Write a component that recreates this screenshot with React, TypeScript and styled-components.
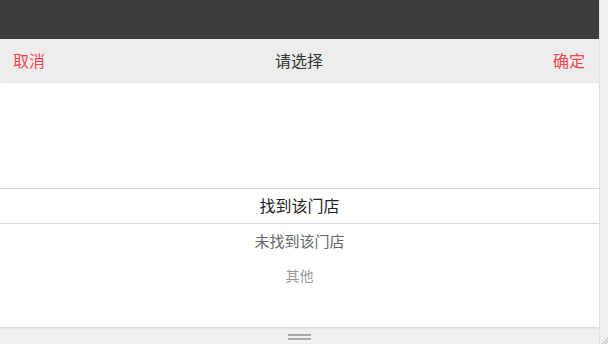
import React from "react";
import styled, { createGlobalStyle } from "styled-components";

const GlobalStyle = createGlobalStyle`
  html, body {
    margin: 0;
    padding: 0;
    background: #f0f0f0;
  }
  body {
    font-family: "Liberation Sans", "Noto Sans CJK SC", sans-serif;
  }
`;

const Screen = styled.div`
  width: 608px;
  height: 344px;
  display: flex;
  overflow: hidden;
  background: #f0f0f0;
`;

const Phone = styled.div`
  width: 599px;
  display: flex;
  flex-direction: column;
  border-right: 1px solid #e2e2e2;
`;

const Mask = styled.div`
  height: 39px;
  background: #3d3d3d;
`;

const Toolbar = styled.div`
  height: 44px;
  box-sizing: border-box;
  background: #ededed;
  display: flex;
  align-items: center;
  justify-content: space-between;
  padding: 0 14px 3px 13px;
  font-size: 16px;
`;

const ToolButton = styled.span`
  color: #f2464c;
  cursor: pointer;
`;

const Title = styled.span`
  color: #333;
`;

const Wheel = styled.div`
  height: 245px;
  background: #fff;
  padding-top: 105px;
  box-sizing: border-box;
  overflow: hidden;
  border-bottom: 1px solid #dedede;
  box-shadow: 0 1px 2px rgba(0, 0, 0, 0.06);
`;

const Item = styled.div<{ $level: number }>`
  height: 35px;
  box-sizing: border-box;
  display: flex;
  align-items: center;
  justify-content: center;
  padding-bottom: ${(p) => 2 + p.$level}px;
  font-size: ${(p) => 16 - p.$level}px;
  color: ${(p) => ["#222", "#666", "#999"][p.$level]};
  &.selected {
    height: 36px;
    border-top: 1px solid #d9d9d9;
    border-bottom: 1px solid #d9d9d9;
  }
`;

const Footer = styled.div`
  flex: 1;
  display: flex;
  justify-content: center;
  padding-top: 6px;
`;

const Handle = styled.div`
  width: 23px;
  display: flex;
  flex-direction: column;
  gap: 2px;
  span {
    height: 2px;
    background: #a8a8a8;
  }
`;

const Track = styled.div`
  flex: 1;
  display: flex;
  align-items: flex-end;
  justify-content: flex-end;
`;

const options = ["找到该门店", "未找到该门店", "其他"];

export default function App() {
  return (
    <Screen>
      <GlobalStyle />
      <Phone>
        <Mask />
        <Toolbar>
          <ToolButton>取消</ToolButton>
          <Title>请选择</Title>
          <ToolButton>确定</ToolButton>
        </Toolbar>
        <Wheel>
          {options.map((o, i) => (
            <Item key={o} $level={i} className={i === 0 ? "selected" : undefined}>
              {o}
            </Item>
          ))}
        </Wheel>
        <Footer>
          <Handle>
            <span />
            <span />
          </Handle>
        </Footer>
      </Phone>
      <Track>
        <svg width="6" height="6" viewBox="0 0 6 6">
          <path d="M6 0 L0 6 M6 3 L3 6" stroke="#b5b5b5" strokeWidth="1" />
        </svg>
      </Track>
    </Screen>
  );
}
